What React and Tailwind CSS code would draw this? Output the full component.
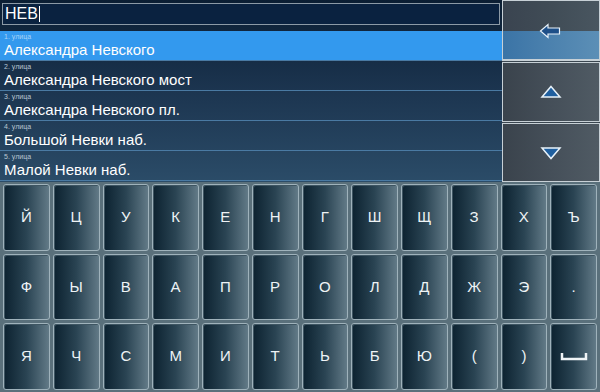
const rows = [
  { n: 1, name: 'Александра Невского' },
  { n: 2, name: 'Александра Невского мост' },
  { n: 3, name: 'Александра Невского пл.' },
  { n: 4, name: 'Большой Невки наб.' },
  { n: 5, name: 'Малой Невки наб.' },
];

const keys = [
  ['Й', 'Ц', 'У', 'К', 'Е', 'Н', 'Г', 'Ш', 'Щ', 'З', 'Х', 'Ъ'],
  ['Ф', 'Ы', 'В', 'А', 'П', 'Р', 'О', 'Л', 'Д', 'Ж', 'Э', '.'],
  ['Я', 'Ч', 'С', 'М', 'И', 'Т', 'Ь', 'Б', 'Ю', '(', ')', '_'],
];

function Key({ k }) {
  return (
    <div className="flex items-center justify-center rounded-[3px] border border-[#9fb2bb] bg-gradient-to-r from-[#0c2230] via-[#2a4453] to-[#627a87] shadow-[inset_1px_1px_0_#3e5562]">
      {k === '_' ? (
        <svg width="28" height="10" viewBox="0 0 28 10">
          <path d="M2 1 V7 H26 V1" fill="none" stroke="#f0f4f6" strokeWidth="2.5" />
        </svg>
      ) : (
        <span className="text-[15px] text-[#eef3f5]">{k}</span>
      )}
    </div>
  );
}

export default function App() {
  return (
    <div className="w-[600px] h-[392px] overflow-hidden bg-[#4d626d] font-['Liberation_Sans',Arial,sans-serif] flex flex-col">
      {/* top: input, results, side buttons */}
      <div className="flex h-[182px] bg-gradient-to-b from-[#0b1e33] via-[#1c3550] to-[#2b4c68]">
        <div className="w-[502px] flex flex-col">
          <div className="h-[31px] px-[2px] pt-[3px]">
            <div className="h-[22px] border border-[#8c9aa6] bg-[#0a2240] flex items-center px-[2px]">
              <span className="text-[16px] leading-none text-white">НЕВ</span>
              <span className="w-px h-[16px] bg-white ml-px" />
            </div>
          </div>
          {rows.map((r, i) => (
            <div
              key={r.n}
              className={`h-[30px] flex flex-col pl-[4px] border-b border-[#4a7aa3] ${i === 0 ? 'bg-[#3399ee]' : ''}`}
            >
              <span className={`text-[7px] leading-[8px] mt-[2px] ${i === 0 ? 'text-[#a8d4f8]' : 'text-[#b9c6d2]'}`}>{r.n}. улица</span>
              <span className="text-[15px] leading-[18px] text-white">{r.name}</span>
            </div>
          ))}
        </div>
        <div className="w-[98px] flex flex-col bg-[#3a4650]">
          <div className="h-[61px] flex flex-col">
            <div className="h-[31px] border-t border-r border-l border-[#c7d0d6] bg-gradient-to-r from-[#3a4450] via-[#404c56] to-[#495660]" />
            <div className="h-[30px] border-b-2 border-r border-l border-[#c7d0d6] bg-gradient-to-r from-[#3b74a6] to-[#5c8fb6] relative">
              <svg className="absolute left-[36px] top-[-8px]" width="22" height="16" viewBox="0 0 22 16">
                <path d="M1.5 8 L9 1.5 V5 H20.5 V11 H9 V14.5 Z" fill="#1d4f88" stroke="#e8f2fa" strokeWidth="1.2" strokeLinejoin="miter" />
              </svg>
            </div>
          </div>
          <div className="h-[60px] mt-[1px] border border-[#c7d0d6] bg-gradient-to-r from-[#3a434c] via-[#454f59] to-[#505b64] flex items-center justify-center">
            <svg width="22" height="14" viewBox="0 0 22 14">
              <path d="M11 1.5 L20 12 H2 Z" fill="#1f5f9f" stroke="#e8f2fa" strokeWidth="1.5" />
            </svg>
          </div>
          <div className="h-[59px] mt-[1px] border border-[#c7d0d6] bg-gradient-to-r from-[#3a434c] via-[#454f59] to-[#505b64] flex items-center justify-center">
            <svg width="22" height="14" viewBox="0 0 22 14">
              <path d="M2 2 H20 L11 12.5 Z" fill="#1f5f9f" stroke="#e8f2fa" strokeWidth="1.5" />
            </svg>
          </div>
        </div>
      </div>

      {/* keyboard */}
      <div className="flex-1 grid grid-rows-3 gap-[3px] px-[3px] pt-[2px] pb-[2px] bg-[#5a707b]">
        {keys.map((row, ri) => (
          <div key={ri} className="grid grid-cols-12 gap-[3px]">
            {row.map((k) => <Key key={k} k={k} />)}
          </div>
        ))}
      </div>
    </div>
  );
}
